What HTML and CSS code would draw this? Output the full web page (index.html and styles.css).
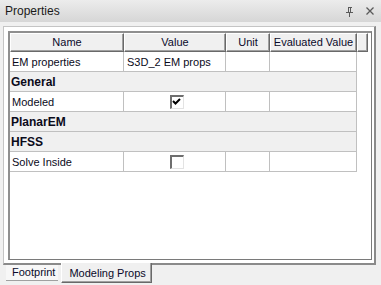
FILE: index.html
```html
<!DOCTYPE html>
<html>
<head>
<meta charset="utf-8">
<link rel="stylesheet" href="styles.css">
</head>
<body>
<div class="titlebar">
  <span class="title">Properties</span>
  <span class="tb-icons">
    <svg class="pin" width="9" height="10" viewBox="0 0 9 10"><path d="M2.5 0.5h4M3.5 0.5v5M5.5 0.5v5M1 5.5h7M4.5 5.5v4" stroke="#5a5a5a" stroke-width="1" fill="none" shape-rendering="crispEdges"/></svg>
    <svg class="close" width="8" height="8" viewBox="0 0 8 8"><path d="M0.5 0.5L7.5 7.5M7.5 0.5L0.5 7.5" stroke="#5a5a5a" stroke-width="1.3" fill="none"/></svg>
  </span>
</div>
<div class="panel">
  <div class="grid">
    <div class="header">
      <div class="hc c1">Name</div>
      <div class="hc c2">Value</div>
      <div class="hc c3">Unit</div>
      <div class="hc c4">Evaluated Value</div>
      <div class="hc c5"></div>
    </div>
    <div class="row">
      <div class="cell c1">EM properties</div>
      <div class="cell c2">S3D_2 EM props</div>
      <div class="cell c3"></div>
      <div class="cell c4"></div>
    </div>
    <div class="row cat"><div class="cell span">General</div></div>
    <div class="row">
      <div class="cell c1">Modeled</div>
      <div class="cell c2 center"><span class="chk"><svg width="10" height="10" viewBox="0 0 10 10"><path d="M1 4l2.5 2.5L8 2" stroke="#000" stroke-width="2" fill="none"/></svg></span></div>
      <div class="cell c3"></div>
      <div class="cell c4"></div>
    </div>
    <div class="row cat"><div class="cell span">PlanarEM</div></div>
    <div class="row cat"><div class="cell span">HFSS</div></div>
    <div class="row">
      <div class="cell c1">Solve Inside</div>
      <div class="cell c2 center"><span class="chk"></span></div>
      <div class="cell c3"></div>
      <div class="cell c4"></div>
    </div>
  </div>
</div>
<div class="tabs">
  <div class="tab">Footprint</div>
  <div class="tab active">Modeling Props</div>
</div>
</body>
</html>
```
FILE: styles.css
```css
html, body {
  margin: 0;
  padding: 0;
}
body {
  width: 381px;
  height: 285px;
  background: #f0f0f0;
  font-family: "Liberation Sans", Arial, sans-serif;
  font-size: 11px;
  color: #000;
  overflow: hidden;
}
.titlebar {
  height: 22px;
  display: flex;
  align-items: center;
  justify-content: space-between;
  padding: 0 7px 0 5px;
  background: linear-gradient(#ececec, #d6d6d6);
}
.title {
  font-family: "Liberation Sans", sans-serif;
  font-size: 12px;
  color: #1a1a1a;
}
.tb-icons {
  display: flex;
  align-items: center;
  gap: 12px;
}
.pin { margin-top: 1px; }
.panel {
  margin: 4px 5px 0 3px;
  height: 232px;
  background: #fff;
  border: 1px solid #c4c4c4;
  border-bottom: 2px solid #8a8a8a;
  border-right: 2px solid #8a8a8a;
  padding: 4px 2px 0 4px;
}
.grid {
  height: 226px;
  border-top: 2px solid #8f8f8f;
  border-left: 2px solid #8f8f8f;
  border-right: 1px solid #7a7a7a;
  border-bottom: 1px solid #7a7a7a;
  background: #fff;
}
.header {
  display: flex;
  height: 19px;
}
.hc {
  box-sizing: border-box;
  height: 19px;
  background: #f0f0f0;
  border-top: 1px solid #fff;
  border-left: 1px solid #fff;
  border-right: 1px solid #696969;
  border-bottom: 1px solid #696969;
  box-shadow: inset -1px -1px 0 #a0a0a0;
  text-align: center;
  line-height: 16px;
  color: #0a0a2a;
}
.c1 { width: 114px; }
.c2 { width: 102px; }
.c3 { width: 44px; }
.c4 { width: 87px; }
.c5 { width: 11px; }
.row {
  display: flex;
  width: 347px;
  height: 20px;
  box-sizing: border-box;
  border-bottom: 1px solid #c0c0c0;
}
.cell {
  box-sizing: border-box;
  height: 19px;
  border-right: 1px solid #c0c0c0;
  line-height: 20px;
  padding-left: 2px;
  white-space: nowrap;
  color: #0a0a1a;
}
.cell.c2 { padding-left: 3px; }
.cat .span {
  width: 347px;
  background: #f0f0f0;
  font-weight: bold;
  font-size: 12px;
  padding-left: 1px;
}
.center {
  display: flex;
  align-items: center;
  justify-content: center;
}
.chk {
  box-sizing: border-box;
  width: 14px;
  height: 14px;
  margin-left: 1px;
  background: #fff;
  border-top: 2px solid #6e6e6e;
  border-left: 2px solid #6e6e6e;
  border-right: 1px solid #e3e3e3;
  border-bottom: 1px solid #e3e3e3;
  display: flex;
  align-items: center;
  justify-content: center;
}
.tabs {
  display: flex;
  align-items: flex-start;
  padding-left: 6px;
}
.tab {
  height: 15px;
  line-height: 15px;
  padding: 0 3px 0 6px;
  font-size: 11px;
  color: #0a0a2a;
  background: #f7f7f7;
  border-bottom: 1px solid #a0a0a0;
}
.tab.active {
  position: relative;
  z-index: 1;
  margin-top: -2px;
  margin-left: 3px;
  height: 19px;
  line-height: 21px;
  padding: 0 5px 0 7px;
  background: #f0f0f0;
  border-left: 1px solid #fff;
  border-right: 1px solid #696969;
  border-bottom: 1px solid #696969;
  box-shadow: inset -1px -1px 0 #a0a0a0;
}
```
